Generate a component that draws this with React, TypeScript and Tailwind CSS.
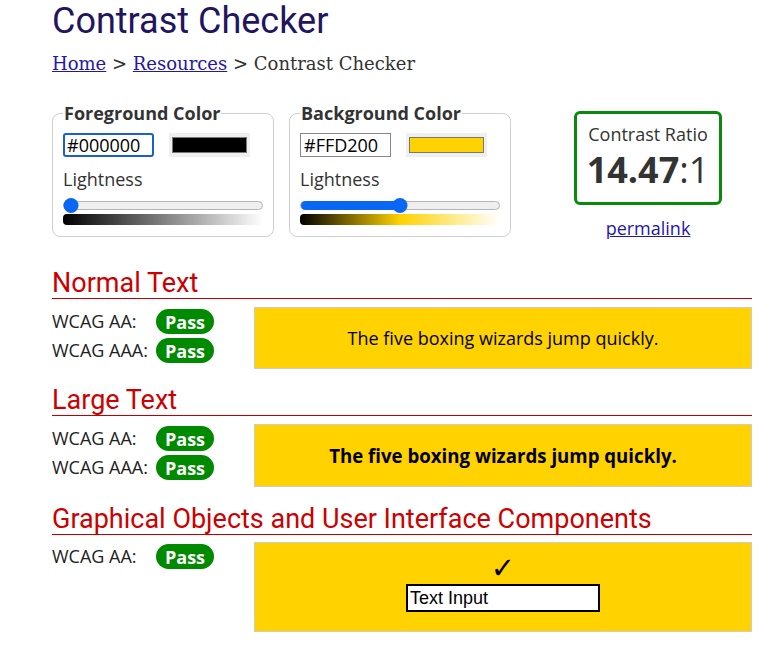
const sans = { fontFamily: '"Open Sans", "Liberation Sans", sans-serif' };

const Pass = () => (
  <span className="inline-flex h-[25px] items-center rounded-full bg-[#008a00] px-[9px] text-[18px] font-bold leading-none text-white">
    Pass
  </span>
);

const Row = ({ label }: { label: string }) => (
  <div className="flex h-[29px] items-center">
    <span className="w-[104px] text-[18px] text-[#222]">{label}</span>
    <Pass />
  </div>
);

const Heading = ({ children }: { children: React.ReactNode }) => (
  <h2 className="border-b border-[#c00000] font-['Roboto',sans-serif] text-[27px] leading-[30px] text-[#cc0000]">
    {children}
  </h2>
);

const Slider = ({ pct, gradient }: { pct: number; gradient: string }) => (
  <div className="mt-[10px]">
    <div className="relative h-[9px] rounded-full border border-[#b5b5b5] bg-[#efefef]">
      <div
        className="absolute left-0 top-[-1px] h-[9px] rounded-full bg-[#0a66f5]"
        style={{ width: `${pct}%` }}
      />
      <div
        className="absolute top-[-4px] h-[15px] w-[15px] -translate-x-1/2 rounded-full bg-[#0a66f5]"
        style={{ left: `calc(${pct}% + ${pct === 0 ? 7 : 0}px)` }}
      />
    </div>
    <div className="mt-[4px] h-[11px] rounded-sm" style={{ background: gradient }} />
  </div>
);

const ColorBox = ({
  legend,
  value,
  color,
  focused,
  pct,
  gradient,
}: {
  legend: string;
  value: string;
  color: string;
  focused?: boolean;
  pct: number;
  gradient: string;
}) => (
  <fieldset className="w-[222px] rounded-lg border border-[#cfcfcf] px-[10px] pb-[11px]">
    <legend className="px-[1px] text-[18px] font-bold leading-[24px] text-[#333]">{legend}</legend>
    <div className="mt-[8px] flex items-center gap-[15px]">
      <div
        className={
          focused
            ? "flex h-[24px] w-[91px] items-center rounded-[3px] border-2 border-[#1a5fd0] px-[2px] text-[18px] text-black"
            : "flex h-[24px] w-[91px] items-center border border-[#888] px-[3px] text-[18px] text-black"
        }
      >
        {value}
      </div>
      <div className="flex h-[24px] w-[81px] items-center bg-[#efefef] px-[3px]">
        <div className="h-[16px] w-full border border-[#777]" style={{ background: color }} />
      </div>
    </div>
    <div className="mt-[10px] text-[18px] leading-[24px] text-[#333]">Lightness</div>
    <Slider pct={pct} gradient={gradient} />
  </fieldset>
);

export default function App() {
  return (
    <div className="min-h-[649px] bg-white pl-[52px] pr-[18px] pb-4" style={sans}>
      <h1 className="font-['Roboto',sans-serif] text-[36px] leading-[42px] text-[#22145e]">
        Contrast Checker
      </h1>
      <nav className="mt-[10px] font-['DejaVu_Serif',serif] text-[18px] leading-[24px] text-[#333]">
        <a href="#" className="text-[#2416a8] underline">Home</a> &gt;{" "}
        <a href="#" className="text-[#2416a8] underline">Resources</a> &gt; Contrast Checker
      </nav>

      <div className="mt-[25px] flex items-start">
        <ColorBox
          legend="Foreground Color"
          value="#000000"
          color="#000000"
          focused
          pct={0}
          gradient="linear-gradient(to right, #000, #fff)"
        />
        <div className="ml-[15px]">
          <ColorBox
            legend="Background Color"
            value="#FFD200"
            color="#FFD200"
            pct={50}
            gradient="linear-gradient(to right, #000, #ffd200 50%, #fff)"
          />
        </div>
        <div className="ml-[63px] mt-[10px] flex flex-col items-center">
          <div className="h-[94px] w-[148px] rounded-md border-[3px] border-[#0a8a0a] pt-[8px] text-center text-[#333]">
            <div className="text-[18px] leading-[24px]">Contrast Ratio</div>
            <div className="mt-[1px] text-[36px] leading-[46px]">
              <span className="font-bold">14.47</span>:1
            </div>
          </div>
          <a href="#" className="mt-[11px] text-[18px] leading-[24px] text-[#2416a8] underline">
            permalink
          </a>
        </div>
      </div>

      <section className="mt-[28px]">
        <Heading>Normal Text</Heading>
        <div className="mt-[8px] grid grid-cols-[202px_1fr]">
          <div>
            <Row label="WCAG AA:" />
            <Row label="WCAG AAA:" />
          </div>
          <div className="flex h-[62px] items-center justify-center border border-[#cccccc] bg-[#FFD200] text-[18px] text-black">
            The five boxing wizards jump quickly.
          </div>
        </div>
      </section>

      <section className="mt-[16px]">
        <Heading>Large Text</Heading>
        <div className="mt-[8px] grid grid-cols-[202px_1fr]">
          <div>
            <Row label="WCAG AA:" />
            <Row label="WCAG AAA:" />
          </div>
          <div className="flex h-[63px] items-center justify-center border border-[#cccccc] bg-[#FFD200] text-[18.67px] font-bold text-black">
            The five boxing wizards jump quickly.
          </div>
        </div>
      </section>

      <section className="mt-[17px]">
        <Heading>Graphical Objects and User Interface Components</Heading>
        <div className="mt-[7px] grid grid-cols-[202px_1fr]">
          <div>
            <Row label="WCAG AA:" />
          </div>
          <div className="flex h-[90px] flex-col items-center border border-[#cccccc] bg-[#FFD200] pt-[10px]">
            <span className="font-['DejaVu_Sans',sans-serif] text-[29px] leading-[30px] text-black">✓</span>
            <div className="mt-[1px] flex h-[28px] w-[194px] items-center border-2 border-black bg-white px-[2px] font-['Liberation_Sans',sans-serif] text-[18px] text-black">
              Text Input
            </div>
          </div>
        </div>
      </section>
    </div>
  );
}
